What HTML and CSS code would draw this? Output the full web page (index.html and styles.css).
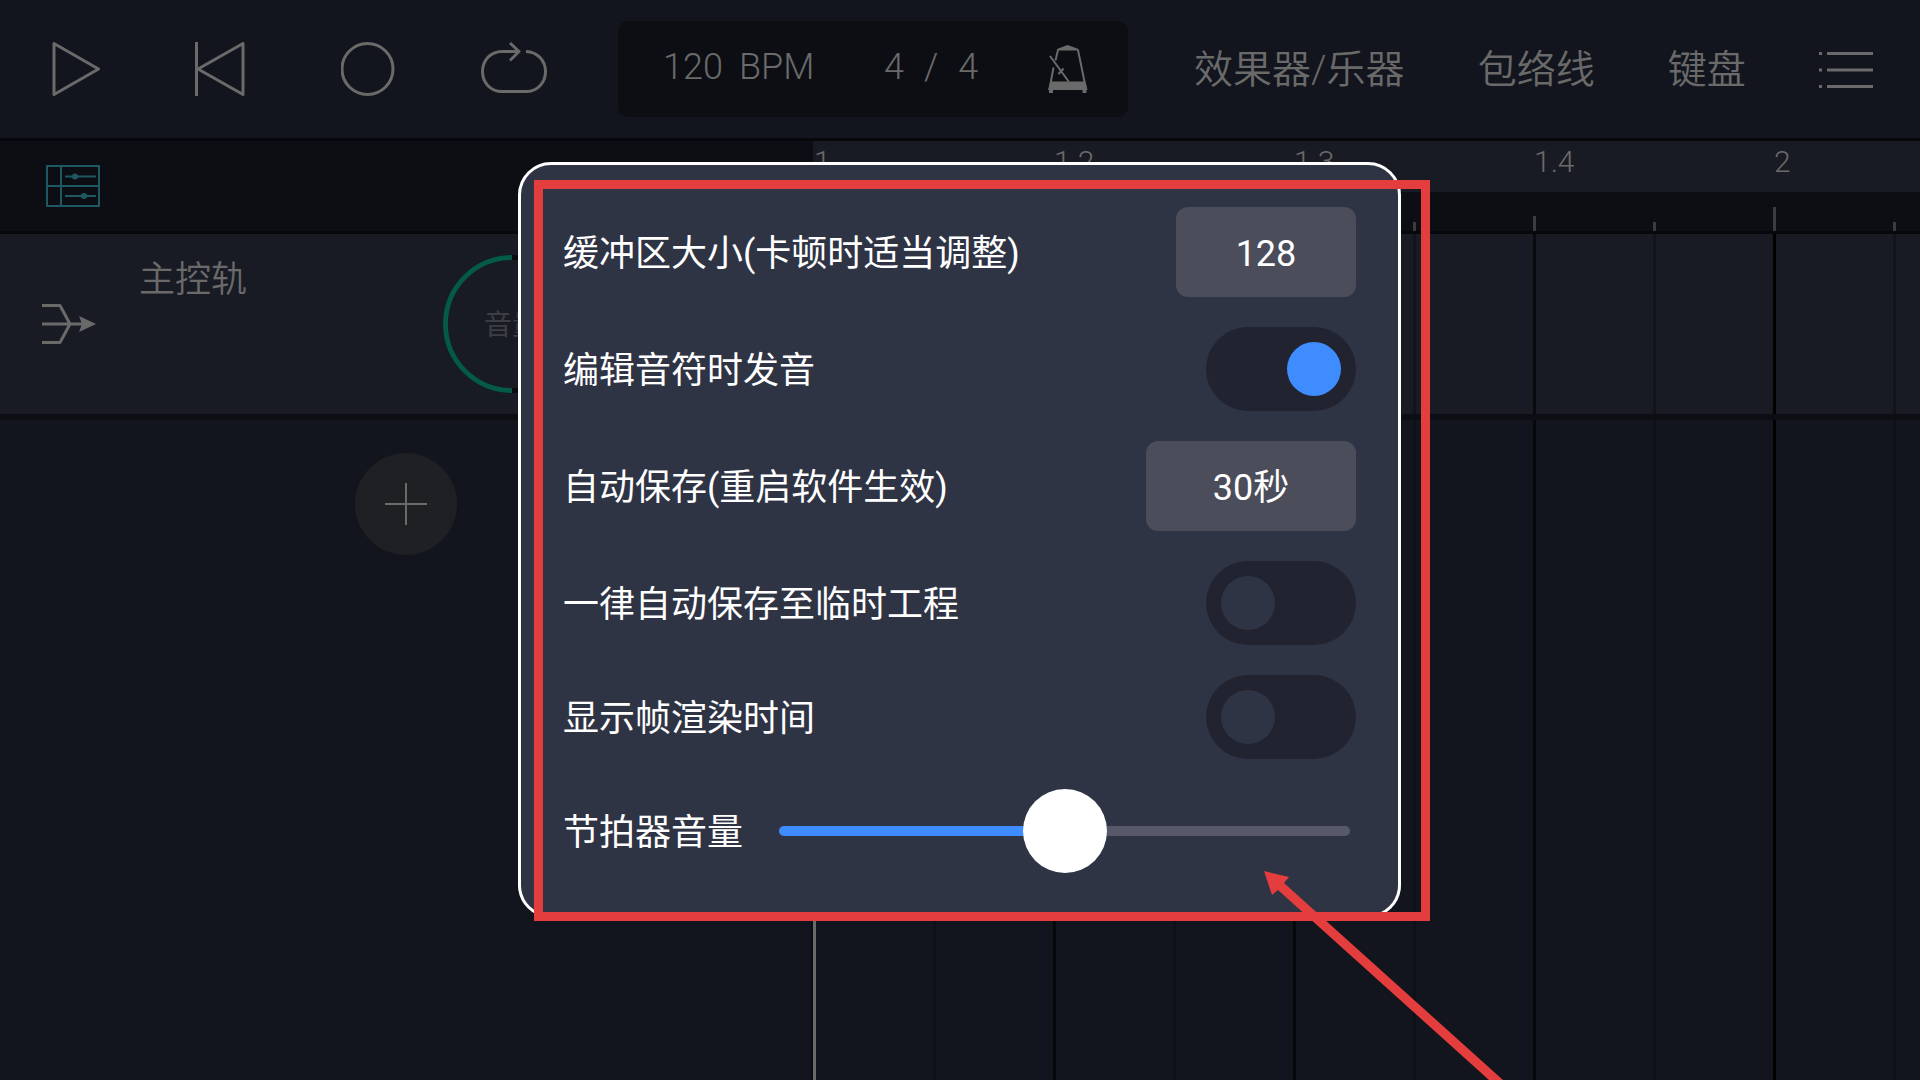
FILE: index.html
```html
<!DOCTYPE html>
<html lang="zh-CN">
<head>
<meta charset="utf-8">
<meta name="viewport" content="width=device-width, initial-scale=1">
<title>工程设置</title>
<link rel="stylesheet" href="styles.css">
</head>
<body>
<header class="toolbar">
  <div class="transport">
    <button type="button" aria-label="播放"><svg width="54" height="54" viewBox="0 0 54 54"><path d="M5 1.500L49.500 27 5 52.500Z"/></svg></button>
    <button type="button" aria-label="回到开头"><svg width="54" height="54" viewBox="0 0 54 54"><path d="M1.500 0V54M48 1.500V52.500L3 27Z"/></svg></button>
    <button type="button" aria-label="录音"><svg width="54" height="54" viewBox="0 0 54 54"><circle cx="26.500" cy="27" r="25.500"/></svg></button>
    <button type="button" aria-label="循环"><svg width="66" height="54" viewBox="0 0 66 54"><path d="M38 9.500H21C9 9.500 1.500 19 1.500 29.500S9 49.500 21 49.500H45C57 49.500 64.500 40 64.500 29.500S57 10 45 9.500M29 1L38 9.500 29 18.500"/></svg></button>
  </div>
  <div class="display">
    <button type="button" class="readout"><span>120</span><span>BPM</span></button>
    <button type="button" class="readout meter"><span>4</span><span>/</span><span>4</span></button>
    <button type="button" aria-label="节拍器"><svg class="metronome" width="40" height="48" viewBox="0 0 40 48"><path d="M9 4L19.500 0 30.500 4V5.500H9ZM2.500 36.500H37.500L39.500 45H38.500V48H34.500V45H5V48H1V45H0Z" fill="#6a6a6a" stroke="none"/><path d="M10 5L7.500 15.500M5.500 22.500L1.500 44M30 5L38 44M2 11L21 37M10.500 29L15.500 23.500"/></svg></button>
  </div>
  <nav class="menu">
    <button type="button">效果器/乐器</button>
    <button type="button">包络线</button>
    <button type="button">键盘</button>
    <button type="button" aria-label="菜单"><svg width="54" height="38" viewBox="0 0 54 38"><path d="M0 2.500H3M8 2.500H54M0 19H3M8 19H54M0 35.500H3M8 35.500H54"/></svg></button>
  </nav>
</header>
<div class="split timebar">
  <div class="side tools">
    <button type="button" aria-label="混音台"><svg class="mixer" width="54" height="42" viewBox="0 0 54 42"><path d="M1 1H53V41H1ZM15 1V41M1 21H53M19 11.500H50M19 31H50"/><circle cx="29" cy="11.500" r="2"/><circle cx="38" cy="31" r="2"/></svg></button>
  </div>
  <div class="ruler">
    <div class="beats"><span>1</span><span>1.2</span><span>1.3</span><span>1.4</span><span>2</span></div>
    <div class="ticks"></div>
  </div>
</div>
<main class="workspace">
  <div class="split track">
    <div class="side master">
      <svg class="route" width="54" height="42" viewBox="0 0 54 42"><path d="M0 2.500H18L28 21 18 39.500H0M0 21H40"/><path d="M37 13L54 21 37 29 40 21Z" fill="#6a6a6a" stroke="none"/></svg>
      <h2>主控轨</h2>
      <div class="knob">
        <svg width="138" height="138" viewBox="0 0 138 138"><circle class="knob-rest" cx="69" cy="69" r="66.500"/><path class="knob-level" d="M69 135.500A66.500 66.500 0 0 1 69 2.500"/></svg>
        <span>音量</span>
      </div>
    </div>
    <div class="lane"></div>
  </div>
  <div class="split empty">
    <div class="side"><button type="button" class="add" aria-label="添加轨道"><svg width="42" height="42" viewBox="0 0 42 42"><path d="M0 21H42M21 0V42"/></svg></button></div>
    <div class="lane"></div>
  </div>
  <div class="playhead"></div>
</main>
<div class="overlay">
  <form class="settings" role="dialog" aria-label="设置">
    <div class="row"><label for="buffer">缓冲区大小(卡顿时适当调整)</label><button type="button" id="buffer" class="choice">128</button></div>
    <div class="row"><label for="audible">编辑音符时发音</label><input type="checkbox" class="switch" id="audible" checked></div>
    <div class="row"><label for="autosave">自动保存(重启软件生效)</label><button type="button" id="autosave" class="choice wide">30秒</button></div>
    <div class="row"><label for="temp">一律自动保存至临时工程</label><input type="checkbox" class="switch" id="temp"></div>
    <div class="row"><label for="frames">显示帧渲染时间</label><input type="checkbox" class="switch" id="frames"></div>
    <div class="row"><label for="volume">节拍器音量</label><input type="range" class="slider" id="volume" min="0" max="100" value="50"></div>
    <div class="mark"></div>
    <svg class="pointer" width="243" height="209" viewBox="0 0 243 209"><path d="M0 0L25 6 20 12 239 209H225L14 19 8 24Z"/></svg>
  </form>
</div>
</body>
</html>
```
FILE: styles.css
```css
* { box-sizing: border-box; }

body {
  margin: 0;
  height: 100vh;
  display: flex;
  flex-direction: column;
  overflow: hidden;
  background: #12151d;
  color: #6a6a6a;
  font-family: Roboto, "Noto Sans CJK SC", sans-serif;
  line-height: 1.2;
}

button {
  display: flex;
  align-items: center;
  justify-content: center;
  margin: 0;
  padding: 0;
  border: 0;
  background: none;
  color: inherit;
  font: inherit;
  white-space: nowrap;
}

svg {
  display: block;
  fill: none;
  stroke: #6a6a6a;
  stroke-width: 3;
  stroke-linejoin: round;
}

.toolbar {
  display: flex;
  align-items: center;
  height: 141px;
  flex: none;
  padding: 0 47px 0 3px;
  border-bottom: 3px solid #07080c;
}

.transport { display: flex; }
.transport button { width: 146px; }

.display {
  display: flex;
  align-items: center;
  justify-content: space-between;
  width: 510px;
  height: 96px;
  margin-left: 31px;
  padding: 0 40px 0 45px;
  border-radius: 10px;
  background: #0d0e13;
  font-weight: 300;
  font-size: 36px;
}

.readout {
  gap: 16px;
  height: 48px;
  padding-bottom: 2px;
}

.meter { gap: 20px; }

.metronome { stroke-width: 2; }

.menu {
  display: flex;
  flex: 1;
  align-items: center;
  justify-content: space-between;
  margin-left: 66px;
  padding-top: 2px;
  font-size: 39px;
  font-weight: 350;
}

.split {
  display: grid;
  grid-template-columns: 813px 1fr;
}

.side { border-right: 2px solid #0b0d12; }

.timebar {
  flex: none;
  height: 93px;
  border-bottom: 3px solid #07080c;
  background: #0d0e13;
}

.tools {
  display: flex;
  align-items: center;
  padding-left: 46px;
}

.mixer { stroke: #1d5863; stroke-width: 2; }
.mixer circle { fill: #1d5863; }

.ruler {
  display: flex;
  flex-direction: column;
  overflow: hidden;
}

.beats {
  display: flex;
  height: 51px;
  background: #191b24;
  font-weight: 300;
  font-size: 30px;
  line-height: 42px;
}

.beats span {
  flex: none;
  width: 240px;
  padding-left: 1px;
}

.ticks {
  flex: 1;
  background:
    linear-gradient(#3c3c3f, #3c3c3f) 0 100% / 3px 24px no-repeat,
    linear-gradient(#3c3c3f, #3c3c3f) 960px 100% / 3px 24px no-repeat,
    linear-gradient(90deg, #3c3c3f 3px, transparent 3px) 0 100% / 240px 15px repeat-x,
    linear-gradient(90deg, #3c3c3f 3px, transparent 3px) 120px 100% / 240px 9px repeat-x;
}

.workspace {
  position: relative;
  flex: 1;
  display: flex;
  flex-direction: column;
}

.track {
  height: 186px;
  border-bottom: 6px solid #0d0e13;
  background: #191b24;
}

.lane {
  background:
    linear-gradient(90deg, #000 3px, transparent 3px) 0 0 / 960px 100%,
    linear-gradient(90deg, rgba(0, 0, 0, .6) 3px, transparent 3px) 0 0 / 240px 100%,
    linear-gradient(90deg, rgba(0, 0, 0, .25) 3px, transparent 3px) 120px 0 / 240px 100%;
}

.master {
  display: flex;
  align-items: center;
  padding-left: 42px;
}

.master h2 {
  flex: 1;
  align-self: flex-start;
  margin: 22px 0 0 43px;
  font-size: 36px;
  font-weight: 350;
  line-height: 48px;
}

.knob {
  display: grid;
  place-items: center;
  margin-right: 230px;
  color: #3c3e43;
  font-size: 28px;
}

.knob > * { grid-area: 1 / 1; }
.knob span { padding-top: 4px; }
.knob-rest { stroke: #0b0c11; stroke-width: 5; }
.knob-level { stroke: #055a47; stroke-width: 5; }

.empty { flex: 1; }

.add {
  width: 102px;
  height: 102px;
  margin: 33px auto 0;
  border-radius: 50%;
  background: #1f2023;
}

.add svg { stroke-width: 2; }

.playhead {
  position: absolute;
  top: 0;
  bottom: 0;
  left: 813px;
  width: 3px;
  background: #6a6a6a;
}

.overlay {
  position: fixed;
  inset: 0;
  display: grid;
  place-items: center;
  padding-right: 1px;
}

.settings {
  position: relative;
  display: flex;
  flex-direction: column;
  gap: 30px;
  width: 883px;
  max-width: 94vw;
  padding: 42px;
  border: 3px solid #fff;
  border-radius: 33px;
  background: #2f3445;
  color: #fff;
  font-size: 36px;
}

.row {
  display: flex;
  align-items: center;
  justify-content: space-between;
}

.row label { padding-top: 6px; }

.choice {
  width: 180px;
  height: 90px;
  padding-top: 6px;
  border-radius: 12px;
  background: #4b4d5b;
}

.wide { width: 210px; }

.switch {
  appearance: none;
  display: flex;
  width: 150px;
  height: 84px;
  margin: 0;
  padding: 15px;
  border-radius: 42px;
  background: #222331;
}

.switch::before {
  content: "";
  width: 54px;
  height: 54px;
  border-radius: 50%;
  background: #2f3445;
}

.switch:checked { justify-content: flex-end; }
.switch:checked::before { background: #3f8cff; }

.slider {
  appearance: none;
  flex: 1;
  height: 84px;
  margin: 0 6px 0 36px;
  background: none;
}

.slider::-webkit-slider-runnable-track {
  height: 10px;
  border-radius: 5px;
  background: linear-gradient(90deg, #3f8cff 50%, #575968 50%);
}

.slider::-webkit-slider-thumb {
  appearance: none;
  width: 84px;
  height: 84px;
  margin-top: -37px;
  border-radius: 50%;
  background: #fff;
}

.mark {
  position: absolute;
  inset: 15px -32px -6px 13px;
  border: 9px solid #e43d3d;
}

.pointer {
  position: absolute;
  left: 743px;
  top: 706px;
  fill: #e43d3d;
  stroke: none;
}
```
